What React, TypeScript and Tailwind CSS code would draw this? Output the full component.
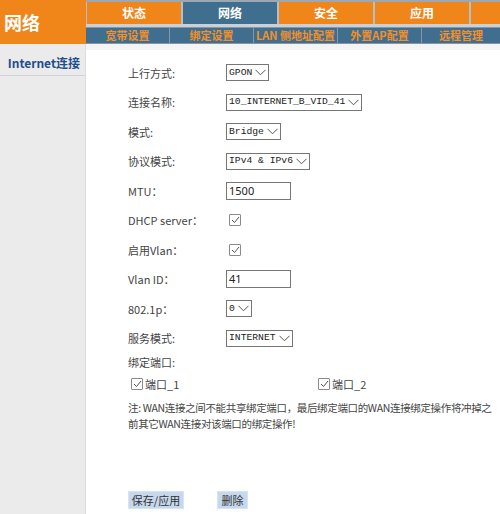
import React from "react";

const cjk = "font-['Microsoft_YaHei','Noto_Sans_CJK_SC',sans-serif]";
const mono = "font-['Liberation_Mono','Noto_Sans_CJK_SC',monospace]";

const topTabs = [
  { label: "状态", active: false },
  { label: "网络", active: true },
  { label: "安全", active: false },
  { label: "应用", active: false },
  { label: "", active: false },
];

const subTabs = ["宽带设置", "绑定设置", "LAN 侧地址配置", "外置AP配置", "远程管理"];

const Chevron = () => (
  <svg width="11" height="7" viewBox="0 0 11 7" className="ml-[3px] mr-[2px] shrink-0">
    <path d="M0.5 0.8 L5.5 5.8 L10.5 0.8" fill="none" stroke="#555" strokeWidth="1" />
  </svg>
);

const FakeSelect = ({ value }: { value: string }) => (
  <div
    className={`flex items-center h-[17px] border border-[#767676] bg-white pl-[2px] text-[9.7px] text-[#222] ${mono}`}
  >
    <span className="whitespace-pre leading-none">{value}</span>
    <Chevron />
  </div>
);

const FakeInput = ({ value }: { value: string }) => (
  <div className="flex items-center h-[18px] w-[65px] border border-[#767676] bg-white pl-[2px] text-[11px] text-[#222] font-['Noto_Sans',sans-serif]">
    {value}
  </div>
);

const Check = () => (
  <div className="w-[12px] h-[12px] border border-[#8a8a8a] bg-white flex items-center justify-center rounded-[1px] shrink-0">
    <svg width="9" height="8" viewBox="0 0 9 8">
      <path d="M1 4 L3.5 6.5 L8 1" fill="none" stroke="#555" strokeWidth="1" />
    </svg>
  </div>
);

const Row = ({ label, children }: { label: string; children: React.ReactNode }) => (
  <div className="flex items-center h-[29.5px]">
    <div className="w-[98px] text-[11px] text-[#444]">{label}</div>
    {children}
  </div>
);

export default function App() {
  return (
    <div className={`w-[500px] h-[514px] bg-white overflow-hidden flex flex-col ${cjk}`}>
      <header className="flex h-[44px] shrink-0">
        <div className="w-[86px] bg-[#f08519] flex items-center pl-[4px] text-white text-[18px] font-bold">
          网络
        </div>
        <div className="flex-1 bg-[#4d7a98] flex flex-col border-t-[2px] border-[#9aa8b3]">
          <div className="flex gap-[2px] pl-[1px] h-[22px] bg-[#b4c0c9]">
            {topTabs.map((t, i) => (
              <div
                key={i}
                className={`flex items-center justify-center text-white text-[12px] font-bold ${
                  i === 4 ? "flex-1" : "w-[94px]"
                } ${t.active ? "bg-[#3f6e8f]" : "bg-[#f08519]"}`}
              >
                {t.label}
              </div>
            ))}
          </div>
          <div className="h-[3px] bg-[#c9d1d7]" />
          <div className="flex h-[17px] bg-[#8796a2] gap-[1px]">
            {subTabs.map((s, i) => (
              <div
                key={s}
                className={`flex items-center justify-center bg-[#3f6e8f] text-[#f3902a] text-[11px] font-bold border-y border-[#8796a2] ${
                  i === 4 ? "flex-1" : "w-[83px]"
                }`}
              >
                {s}
              </div>
            ))}
          </div>
        </div>
      </header>

      <div className="flex flex-1">
        <aside className="w-[86px] bg-[#ebebeb] border-r border-[#dcdcdc] pt-[10px]">
          <div className="text-right pr-[5px] text-[12px] font-bold text-[#1f4e8c] pb-[3px] border-b border-[#d2d2d2]">
            Internet连接
          </div>
        </aside>

        <main className="flex-1 flex flex-col">
          <div className="h-[6px] bg-[#f4f4f4]" />
          <div className="pl-[42px] pt-[8px]">
            <Row label="上行方式:">
              <FakeSelect value="GPON" />
            </Row>
            <Row label="连接名称:">
              <FakeSelect value="10_INTERNET_B_VID_41" />
            </Row>
            <Row label="模式:">
              <FakeSelect value="Bridge" />
            </Row>
            <Row label="协议模式:">
              <FakeSelect value="IPv4 & IPv6" />
            </Row>
            <Row label="MTU：">
              <FakeInput value="1500" />
            </Row>
            <Row label="DHCP server：">
              <div className="pl-[3px]">
                <Check />
              </div>
            </Row>
            <Row label="启用Vlan：">
              <div className="pl-[3px]">
                <Check />
              </div>
            </Row>
            <Row label="Vlan ID：">
              <FakeInput value="41" />
            </Row>
            <Row label="802.1p：">
              <FakeSelect value="0" />
            </Row>
            <Row label="服务模式:">
              <FakeSelect value="INTERNET" />
            </Row>

            <div className="text-[11px] text-[#444] mt-[1px] h-[16px] leading-[16px]">绑定端口:</div>

            <div className="flex items-center h-[26px] mt-[1px]">
              <div className="w-[190px] flex items-center gap-[2px] pl-[3px]">
                <Check />
                <span className="text-[11px] text-[#444]">端口_1</span>
              </div>
              <div className="flex items-center gap-[2px]">
                <Check />
                <span className="text-[11px] text-[#444]">端口_2</span>
              </div>
            </div>

            <p className="text-[10.5px] tracking-[-0.35px] text-[#444] leading-[16px] mt-[3px] whitespace-nowrap">
              注: WAN连接之间不能共享绑定端口，最后绑定端口的WAN连接绑定操作将冲掉之
              <br />
              前其它WAN连接对该端口的绑定操作!
            </p>

            <div className="flex items-center gap-[33px] mt-[59px]">
              <button className="h-[18px] w-[56px] bg-[#c6d8ee] border border-[#d8e4f2] text-[11px] text-[#333] leading-none">
                保存/应用
              </button>
              <button className="h-[18px] w-[31px] bg-[#c6d8ee] border border-[#d8e4f2] text-[11px] text-[#333] leading-none">
                删除
              </button>
            </div>
          </div>
        </main>
      </div>
    </div>
  );
}
